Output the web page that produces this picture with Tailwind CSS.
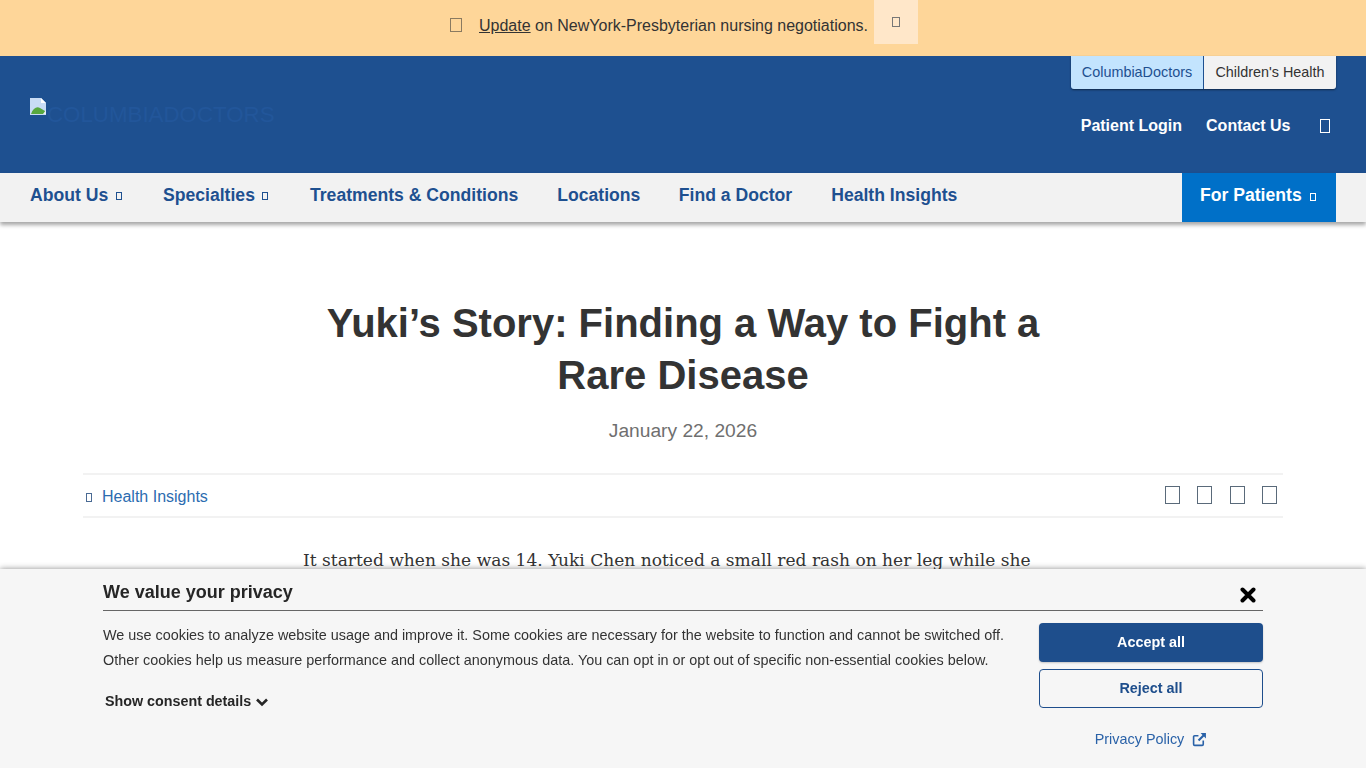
<!DOCTYPE html>
<html lang="en">
<head>
<meta charset="utf-8">
<title>Yuki's Story</title>
<script src="https://cdn.jsdelivr.net/npm/@tailwindcss/browser@4"></script>
</head>
<body class="h-[768px] overflow-hidden bg-white font-['Liberation_Sans',Arial,sans-serif] text-[#333]">
<div class="flex h-14 justify-center bg-[#fed699] pl-[2px]">
  <div class="flex h-14 items-center pb-[4px]">
    <span class="mb-[2px] mr-[17px] h-[14px] w-[12px] border border-[#8a7a60]"></span>
    <span class="text-base text-[#333]"><a class="underline" href="#">Update</a> on NewYork-Presbyterian nursing negotiations.</span>
  </div>
  <div class="ml-[6px] flex h-11 w-[44px] items-center justify-center bg-[#ffe7c9] pb-[1px]"><span class="h-[10px] w-[8px] border border-[#777]"></span></div>
</div>
<header class="flex h-[117px] justify-between bg-[#1e5090] pl-[30px] pr-[30px]">
  <div class="flex items-start pt-[42px]">
    <svg class="h-[17px] w-[17px] shrink-0" viewBox="0 0 17 17"><path d="M0 0h11l5 5v12H0z" fill="#c9dcf5"/><path d="M11 0l5 5h-5z" fill="#fff"/><path d="M1 16c2-6 6-8 9-6l5 3v3z" fill="#58a83f"/><path d="M13 16l3-4v4z" fill="#e8eef7"/></svg>
    <span class="mt-[1px] text-[22.3px] leading-[32px] text-[#22569a]">COLUMBIADOCTORS</span>
  </div>
  <div class="flex flex-col items-end">
    <div class="flex h-[33px] overflow-hidden rounded-b-[3px] text-[14.4px] leading-[33px] shadow-[0_1px_2px_rgba(0,0,0,0.5)]">
      <a class="w-[132px] bg-[#c3e4fe] text-center text-[#1e5090]" href="#">ColumbiaDoctors</a>
      <a class="w-[133px] border-l border-[#1e5090] bg-[#f2f2f2] text-center text-[#333]" href="#">Children's Health</a>
    </div>
    <div class="mt-[25px] flex items-center text-base font-bold text-white">
      <a class="mr-6" href="#">Patient Login</a>
      <a class="mr-[29.5px]" href="#">Contact Us</a>
      <span class="mr-[6px] h-[14px] w-[10px] border border-white"></span>
    </div>
  </div>
</header>
<nav class="relative flex h-[49px] items-center justify-between bg-[#f2f2f2] pl-[30px] pr-[30px] text-[17.6px] font-bold text-[#1e5090] shadow-[0_3px_4px_rgba(0,0,0,0.35)]">
  <div class="flex items-center pb-[4px]">
    <a class="flex w-[133px] items-center" href="#">About Us<span class="ml-[8px] mt-[2px] h-[8px] w-[6px] border border-[#1e5090]"></span></a>
    <a class="flex w-[147px] items-center" href="#">Specialties<span class="ml-[7px] mt-[2px] h-[8px] w-[6px] border border-[#1e5090]"></span></a>
    <a class="mr-[39px]" href="#">Treatments &amp; Conditions</a>
    <a class="mr-[38.5px]" href="#">Locations</a>
    <a class="mr-[39px]" href="#">Find a Doctor</a>
    <a href="#">Health Insights</a>
  </div>
  <a class="flex h-[49px] w-[154px] items-center bg-[#0070c8] pb-[4px] pl-[18px] text-white" href="#">For Patients<span class="ml-[8px] mt-[2px] h-[8px] w-[6px] border border-white"></span></a>
</nav>
<main class="px-[83px]">
  <h1 class="mx-auto mt-[75px] w-[800px] text-center text-[40px] font-bold leading-[52px] text-[#333]">Yuki’s Story: Finding a Way to Fight a<br>Rare Disease</h1>
  <p class="mt-[16px] text-center text-[19.2px] leading-[28px] text-[#6f6f6f]">January 22, 2026</p>
  <div class="mt-[28px] flex h-[45px] items-center justify-between border-y-2 border-[#f2f2f2]">
    <div class="flex items-center pt-[3px] text-base text-[#2b6cb0]"><span class="ml-[3px] mr-[10px] h-[9px] w-[6px] border border-[#4a6a94]"></span><a href="#">Health Insights</a></div>
    <div class="flex gap-[17px] pb-[1px] pr-[6px]">
      <span class="h-[18px] w-[15px] border border-[#5a6a7a]"></span>
      <span class="h-[18px] w-[15px] border border-[#5a6a7a]"></span>
      <span class="ml-[1px] h-[18px] w-[15px] border border-[#5a6a7a]"></span>
      <span class="h-[18px] w-[15px] border border-[#5a6a7a]"></span>
    </div>
  </div>
  <p class="ml-[220px] mt-[27px] whitespace-nowrap font-['DejaVu_Serif',Georgia,serif] text-[17.07px] leading-[30px] text-[#333]">It started when she was 14. Yuki Chen noticed a small red rash on her leg while she</p>
</main>
<aside class="fixed bottom-0 left-0 h-[199px] w-full bg-[#f6f6f6] shadow-[0_0_6px_rgba(0,0,0,0.45)]">
  <div class="mx-[103px] flex h-[42px] items-center justify-between border-b border-[#666] pt-[4px]">
    <h2 class="text-lg font-bold text-[#262626]">We value your privacy</h2>
    <svg class="mr-[7px] mt-[6px] h-[16px] w-[16px]" viewBox="0 0 16 16"><path d="M2.5 2.5l11 11M13.5 2.5l-11 11" stroke="#000" stroke-width="4" stroke-linecap="round"/></svg>
  </div>
  <div class="mx-[103px] flex justify-between">
    <div class="pt-[12px]">
      <p class="w-[915px] text-[14.4px] leading-[25px] text-[#333]">We use cookies to analyze website usage and improve it. Some cookies are necessary for the website to function and cannot be switched off. Other cookies help us measure performance and collect anonymous data. You can opt in or opt out of specific non-essential cookies below.</p>
      <button class="ml-[2px] mt-[18px] flex items-center text-[14.3px] font-bold text-[#262626]">Show consent details<svg class="ml-[5px] h-[10px] w-[12px]" viewBox="0 0 12 10"><path d="M1 2.5L6 7.5l5-5" fill="none" stroke="#262626" stroke-width="2.6"/></svg></button>
    </div>
    <div class="w-[224px] pt-[12px]">
      <button class="block h-[39px] w-full rounded-[4px] bg-[#1e4e8c] text-[14.4px] font-bold text-white shadow-[0_1px_2px_rgba(0,0,0,0.2)]">Accept all</button>
      <button class="mt-[7px] block h-[39px] w-full rounded-[4px] border border-[#1e4e8c] text-[14.4px] font-bold text-[#1e4e8c]">Reject all</button>
      <div class="mt-[21px] flex items-center justify-center text-[14.4px] text-[#2a62a8]"><a href="#">Privacy Policy</a>
        <svg class="ml-[8px] h-[15px] w-[15px]" viewBox="0 0 14 14"><path d="M10.5 8v3.5a1 1 0 0 1-1 1h-7a1 1 0 0 1-1-1v-7a1 1 0 0 1 1-1H6" fill="none" stroke="#2a62a8" stroke-width="1.5"/><path d="M8 1h5v5l-1.8-1.8-4.4 4.4-1.4-1.4 4.4-4.4z" fill="#2a62a8"/></svg>
      </div>
    </div>
  </div>
</aside>
</body>
</html>
